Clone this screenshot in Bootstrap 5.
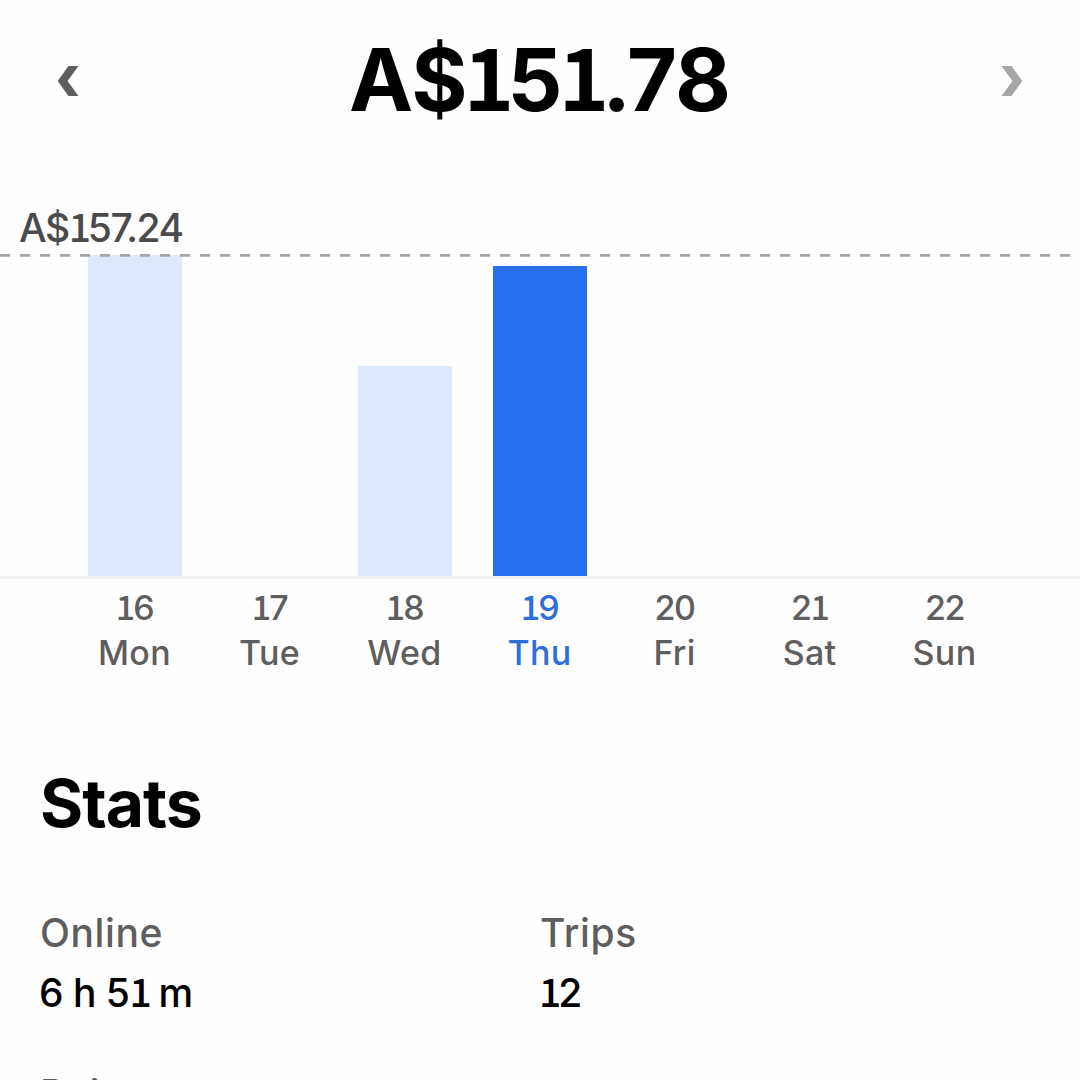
<!DOCTYPE html>
<html lang="en">
<head>
  <meta charset="UTF-8">
  <title>Earnings</title>
  <meta name="viewport" content="width=device-width, initial-scale=1.0">
  <link href="https://cdn.jsdelivr.net/npm/bootstrap@5.3.0/dist/css/bootstrap.min.css" rel="stylesheet">
  <style>
    body {
      font-family: Inter, "Noto Sans", sans-serif;
      color: #000;
      background: #fefefe;
    }

    .screen {
      height: 1080px;
    }

    /* the figure one with a foot */
    .one {
      font-family: "Noto Sans CJK JP", sans-serif;
      line-height: 0;
      letter-spacing: -0.08em;
    }

    .week-header {
      height: 162px;
      padding: 0 57px;
    }

    .week-total {
      font-size: 86px;
      line-height: 86px;
      font-weight: 700;
      margin: 0 4px 2px 0;
      letter-spacing: -4px;
    }

    .week-total .loose {
      letter-spacing: -2px;
    }

    .max-label {
      margin-top: 41px;
      padding-left: 19px;
      height: 52px;
      font-size: 39px;
      line-height: 50px;
      font-weight: 500;
      letter-spacing: -1.5px;
      color: #4b4b4b;
    }

    .plot {
      height: 324px;
      padding: 0 68px 0 67px;
      border-bottom: 3px solid #f3f3f3;
    }

    .max-line {
      left: 0;
      top: -3px;
      width: 100%;
      height: 6px;
    }

    .bar {
      width: 94px;
      background: #dee8fd;
    }

    .bar.today {
      background: #286ef0;
    }

    .days {
      padding: 6px 68px 0 67px;
      font-size: 34px;
      line-height: 45px;
      font-weight: 500;
      color: #5e5e5e;
    }

    .days .today {
      color: #2f6fdb;
    }

    .day-date {
      letter-spacing: -1.5px;
    }

    .day-date .one {
      letter-spacing: -2px;
    }

    .day-name {
      letter-spacing: 0.3px;
    }

    .stats-title {
      margin: 88px 0 60px;
      font-size: 66px;
      line-height: 80px;
      font-weight: 700;
      letter-spacing: -1px;
    }

    .stat {
      font-size: 39px;
      line-height: 60px;
      margin-bottom: 41px;
    }

    .stat-name {
      color: #5e5e5e;
      font-weight: 500;
      letter-spacing: 0.6px;
    }

    .stat-value {
      margin-left: -1px;
      font-weight: 500;
      letter-spacing: -0.5px;
    }
  </style>
</head>
<body>
<main class="screen overflow-hidden">

<!-- Day total with previous / next -->
<header class="week-header d-flex justify-content-between align-items-center">
  <svg width="22" height="30" viewBox="0 0 22 30"><path d="M11.5 0H21.5L10.5 15L21.5 30H11.5L0.7 15Z" fill="#5e5e5e"/></svg>
  <h1 class="week-total"><span class="loose">A</span>$<span class="one">1</span>5<span class="one">1</span>.<span class="loose">7</span>8</h1>
  <svg width="22" height="30" viewBox="0 0 22 30"><path d="M0.5 0H10.5L21.3 15L10.5 30H0.5L11.5 15Z" fill="#a6a6a6"/></svg>
</header>

<!-- Chart -->
<section>
  <div class="max-label">A$<span class="one">1</span>57.24</div>
  <div class="plot position-relative">
    <div id="bars" class="d-flex h-100 align-items-end"></div>
    <svg class="max-line position-absolute"><line x1="0" y1="3.4" x2="1080" y2="3.4" stroke="#a6a6a6" stroke-width="2.8" stroke-dasharray="10 10"/></svg>
  </div>
  <div id="days" class="days d-flex text-center"></div>
</section>

<!-- Stats -->
<section class="px-4 mx-3">
  <h2 class="stats-title">Stats</h2>
  <div class="row g-0">
    <div class="col-6 stat">
      <div class="stat-name">Online</div>
      <div class="stat-value">6 h 5<span class="one">1</span> m</div>
    </div>
    <div class="col-6 stat">
      <div class="stat-name">Trips</div>
      <div class="stat-value"><span class="one">1</span>2</div>
    </div>
    <div class="col-6 stat">
      <div class="stat-name">Points</div>
    </div>
  </div>
</section>

</main>

<script src="https://cdn.jsdelivr.net/npm/bootstrap@5.3.0/dist/js/bootstrap.bundle.min.js"></script>
<script>
  const week = [
    { date: 16, name: "Mon", total: 157.24 },
    { date: 17, name: "Tue", total: 0 },
    { date: 18, name: "Wed", total: 103.1 },
    { date: 19, name: "Thu", total: 151.78, today: true },
    { date: 20, name: "Fri", total: 0 },
    { date: 21, name: "Sat", total: 0 },
    { date: 22, name: "Sun", total: 0 }
  ];
  const max = Math.max(...week.map(day => day.total));

  week.forEach(day => {
    const today = day.today ? "today" : "";
    const date = String(day.date).replace("1", '<span class="one">1</span>');
    document.getElementById("bars").innerHTML +=
      `<div class="w-100 h-100 d-flex justify-content-center align-items-end">
        <div class="bar ${today}" style="height: ${day.total / max * 100}%"></div>
      </div>`;
    document.getElementById("days").innerHTML +=
      `<div class="w-100 ${today}"><div class="day-date">${date}</div><div class="day-name">${day.name}</div></div>`;
  });
</script>

</body>
</html>
